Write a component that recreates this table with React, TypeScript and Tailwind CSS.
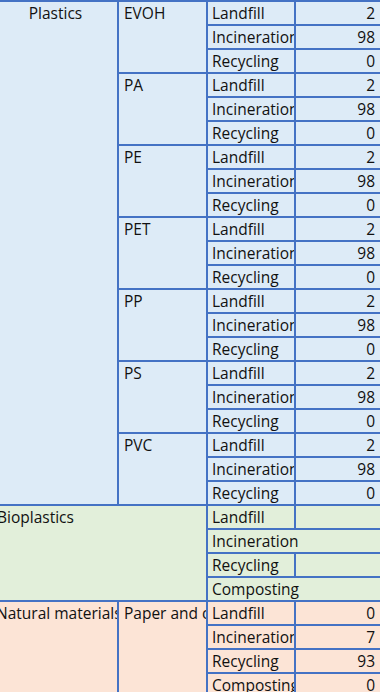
import React from "react";

const plastics = ["EVOH", "PA", "PE", "PET", "PP", "PS", "PVC"];

const plasticRoutes = [
  { route: "Landfill",     share: "2"  },
  { route: "Incineration", share: "98" },
  { route: "Recycling",    share: "0"  },
];

const naturalRoutes = [
  { route: "Landfill",     share: "0"  },
  { route: "Incineration", share: "7"  },
  { route: "Recycling",    share: "93" },
  { route: "Composting",   share: "0"  },
];

const cell = "border-t-2 border-[#4472C4] overflow-hidden whitespace-nowrap leading-[22px]";
const blue  = "bg-[#DDEBF7]";
const green = "bg-[#E2EFDA]";
const peach = "bg-[#FCE4D6]";

export default function App() {
  return (
    <div className="w-[380px] h-[692px] overflow-hidden bg-white text-[15.5px] text-[#111]"
      style={{ fontFamily: '"Open Sans", "Noto Sans", sans-serif' }}>
      <div className="-ml-[6px] grid grid-cols-[123px_89px_88px_86px] auto-rows-[24px]">

        {/* Plastics */}
        <div className={`${cell} ${blue} row-span-21 text-center`}>Plastics</div>
        {plastics.map(name => (
          <React.Fragment key={name}>
            <div className={`${cell} ${blue} row-span-3 border-l-2 pl-[5px]`}>{name}</div>
            {plasticRoutes.map(({ route, share }) => (
              <React.Fragment key={route}>
                <div className={`${cell} ${blue} border-l-2 pl-[4px]`}>{route}</div>
                <div className={`${cell} ${blue} border-l-2 pr-[5px] text-right`}>{share}</div>
              </React.Fragment>
            ))}
          </React.Fragment>
        ))}

        {/* Bioplastics */}
        <div className={`${cell} ${green} row-span-4 col-span-2 pl-[3px]`}>Bioplastics</div>
        <div className={`${cell} ${green} border-l-2 pl-[4px]`}>Landfill</div>
        <div className={`${cell} ${green} border-l-2`} />
        <div className={`${cell} ${green} col-span-2 border-l-2 pl-[4px]`}>Incineration</div>
        <div className={`${cell} ${green} border-l-2 pl-[4px]`}>Recycling</div>
        <div className={`${cell} ${green} border-l-2`} />
        <div className={`${cell} ${green} col-span-2 border-l-2 pl-[4px]`}>Composting</div>

        {/* Natural materials */}
        <div className={`${cell} ${peach} row-span-4 pl-[2px]`}>Natural materials</div>
        <div className={`${cell} ${peach} row-span-4 border-l-2 pl-[5px]`}>Paper and cardboard</div>
        {naturalRoutes.map(({ route, share }) => (
          <React.Fragment key={route}>
            <div className={`${cell} ${peach} border-l-2 pl-[4px]`}>{route}</div>
            <div className={`${cell} ${peach} border-l-2 pr-[5px] text-right`}>{share}</div>
          </React.Fragment>
        ))}
      </div>
    </div>
  );
}
